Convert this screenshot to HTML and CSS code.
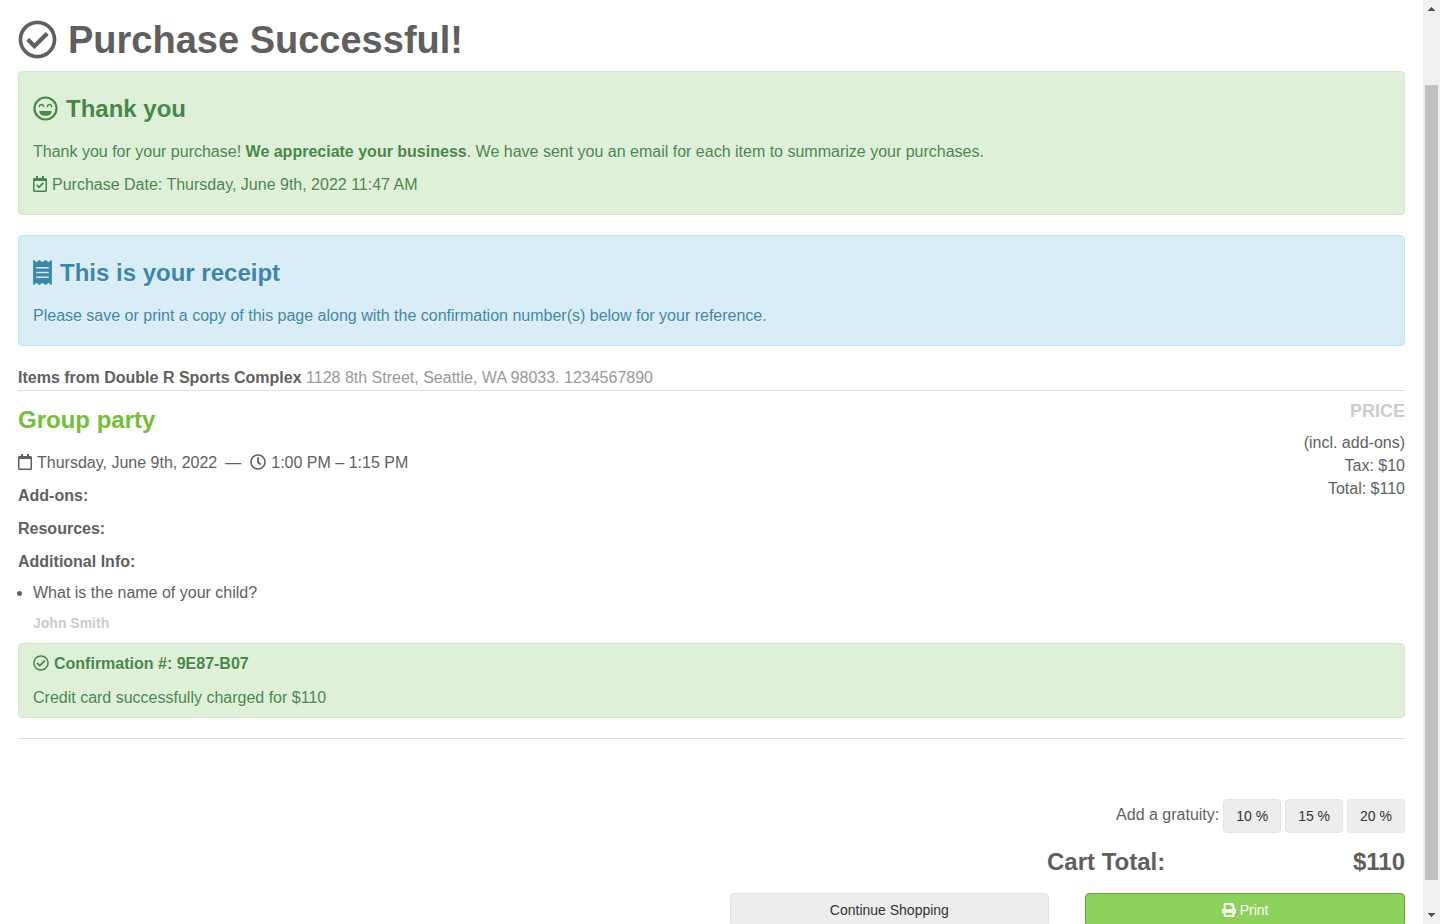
FILE: index.html
```html
<!DOCTYPE html>
<html lang="en">
<head>
<meta charset="utf-8">
<title>Purchase Successful</title>
<link rel="stylesheet" href="styles.css">
</head>
<body>
<svg class="defs" aria-hidden="true">
  <symbol id="circle-check" viewBox="0 0 512 512"><path d="M256 8C119.033 8 8 119.033 8 256s111.033 248 248 248 248-111.033 248-248S392.967 8 256 8zm0 48c110.532 0 200 89.451 200 200 0 110.532-89.451 200-200 200-110.532 0-200-89.451-200-200 0-110.532 89.451-200 200-200m140.204 130.267l-22.536-22.718c-4.667-4.705-12.265-4.736-16.970-.068L215.346 303.697l-59.792-60.277c-4.667-4.705-12.265-4.736-16.970-.069l-22.719 22.536c-4.705 4.667-4.736 12.265-.068 16.971l90.781 91.516c4.667 4.705 12.265 4.736 16.970.068l172.589-171.204c4.704-4.668 4.734-12.266.067-16.971z"/></symbol>
</svg>
<div class="window">
  <main class="page">
    <h1 class="title"><svg class="icon icon-xl" aria-hidden="true"><use href="#circle-check"/></svg>Purchase Successful!</h1>

    <section class="alert success">
      <h3 class="heading"><svg class="icon icon-lg" viewBox="0 0 496 512" aria-hidden="true"><path fill-rule="evenodd" d="M248 8a248 248 0 1 0 0 496a248 248 0 1 0 0-496zm0 44a204 204 0 1 1 0 408a204 204 0 1 1 0-408z"/><path d="M132 306H364C372 306 378 312 376 320C366 372 318 402 272 402H224C178 402 130 372 120 320C118 312 124 306 132 306z"/><path class="line" d="M123 218C130 160 202 160 209 218M287 218C294 160 366 160 373 218"/></svg>Thank you</h3>
      <p>Thank you for your purchase! <strong>We appreciate your business</strong>. We have sent you an email for each item to summarize your purchases.</p>
      <p class="icon-text"><svg class="icon icon-cal" viewBox="0 0 448 512" aria-hidden="true"><path fill-rule="evenodd" d="M400 64h-48V12c0-6.627-5.373-12-12-12h-40c-6.627 0-12 5.373-12 12v52H160V12c0-6.627-5.373-12-12-12h-40c-6.627 0-12 5.373-12 12v52H48C21.490 64 0 85.490 0 112v352c0 26.510 21.490 48 48 48h352c26.510 0 48-21.490 48-48V112c0-26.510-21.490-48-48-48zm-6 400H54a6 6 0 0 1-6-6V160h352v298a6 6 0 0 1-6 6z"/><path d="M341.151 250.236L200.842 389.421c-4.705 4.667-12.303 4.637-16.971-.068l-75.091-75.699c-4.667-4.705-4.637-12.303.068-16.971l22.719-22.536c4.705-4.667 12.303-4.637 16.970.069l44.104 44.461 111.072-110.181c4.705-4.667 12.303-4.637 16.971.068l22.536 22.718c4.667 4.705 4.636 12.303-.069 16.970z"/></svg>Purchase Date: Thursday, June 9th, 2022 11:47 AM</p>
    </section>

    <section class="alert info">
      <h3 class="heading"><svg class="icon icon-receipt" viewBox="0 0 384 512" aria-hidden="true"><path fill-rule="evenodd" d="M358.400 3.200L320 48 265.600 3.200a15.900 15.900 0 0 0-19.200 0L192 48 137.600 3.200a15.900 15.900 0 0 0-19.200 0L64 48 25.600 3.200C15-4.700 0 2.800 0 16v480c0 13.200 15 20.700 25.600 12.800L64 464l54.400 44.800a15.900 15.900 0 0 0 19.200 0L192 464l54.400 44.800a15.900 15.900 0 0 0 19.200 0L320 464l38.400 44.800c10.500 7.900 25.600.4 25.600-12.800V16c0-13.200-15-20.700-25.600-12.800zM320 360c0 4.400-3.600 8-8 8H72c-4.400 0-8-3.600-8-8v-16c0-4.400 3.600-8 8-8h240c4.400 0 8 3.600 8 8v16zm0-96c0 4.400-3.600 8-8 8H72c-4.400 0-8-3.600-8-8v-16c0-4.400 3.600-8 8-8h240c4.400 0 8 3.600 8 8v16zm0-96c0 4.400-3.600 8-8 8H72c-4.400 0-8-3.600-8-8v-16c0-4.400 3.600-8 8-8h240c4.400 0 8 3.600 8 8v16z"/></svg>This is your receipt</h3>
      <p>Please save or print a copy of this page along with the confirmation number(s) below for your reference.</p>
    </section>

    <p class="vendor"><strong>Items from Double R Sports Complex</strong> <span class="muted">1128 8th Street, Seattle, WA 98033. 1234567890</span></p>

    <section class="item">
      <div class="details">
        <h3 class="heading item-name">Group party</h3>
        <p class="icon-text"><svg class="icon icon-cal" viewBox="0 0 448 512" aria-hidden="true"><path fill-rule="evenodd" d="M400 64h-48V12c0-6.600-5.400-12-12-12h-40c-6.600 0-12 5.400-12 12v52H160V12c0-6.600-5.400-12-12-12h-40c-6.600 0-12 5.400-12 12v52H48C21.500 64 0 85.500 0 112v352c0 26.500 21.500 48 48 48h352c26.500 0 48-21.500 48-48V112c0-26.500-21.500-48-48-48zm-6 400H54a6 6 0 0 1-6-6V160h352v298a6 6 0 0 1-6 6z"/></svg>Thursday, June 9th, 2022 <span class="dash">—</span> <svg class="icon icon-sm" viewBox="0 0 512 512" aria-hidden="true"><path d="M256 8C119 8 8 119 8 256s111 248 248 248 248-111 248-248S393 8 256 8zm0 448c-110.500 0-200-89.500-200-200S145.500 56 256 56s200 89.500 200 200-89.500 200-200 200zm61.800-104.400l-84.900-61.700c-3.100-2.300-4.900-5.900-4.900-9.700V116c0-6.600 5.400-12 12-12h32c6.600 0 12 5.400 12 12v141.700l66.800 48.600c5.400 3.900 6.500 11.400 2.600 16.800L334.600 349c-3.900 5.300-11.400 6.500-16.800 2.600z"/></svg>1:00 PM – 1:15 PM</p>
        <p><strong>Add-ons:</strong></p>
        <p><strong>Resources:</strong></p>
        <p><strong>Additional Info:</strong></p>
        <ul class="answers">
          <li>What is the name of your child?<h5 class="answer">John Smith</h5></li>
        </ul>
      </div>
      <div class="price">
        <h4 class="price-label">PRICE</h4>
        <div>(incl. add-ons)</div>
        <div>Tax: $10</div>
        <div>Total: $110</div>
      </div>
    </section>

    <section class="alert success confirmation">
      <strong class="icon-text"><svg class="icon icon-sm" aria-hidden="true"><use href="#circle-check"/></svg>Confirmation #: 9E87-B07</strong>
      <span>Credit card successfully charged for $110</span>
    </section>

    <hr class="rule">

    <div class="gratuity">
      <span class="gratuity-label">Add a gratuity:</span>
      <button class="btn" type="button">10 %</button>
      <button class="btn" type="button">15 %</button>
      <button class="btn" type="button">20 %</button>
    </div>
    <div class="total"><span>Cart Total:</span><span>$110</span></div>
    <div class="actions">
      <button class="btn continue" type="button">Continue Shopping</button>
      <button class="btn print" type="button"><svg class="icon icon-print" viewBox="0 0 512 512" aria-hidden="true"><path fill-rule="evenodd" d="M448 192V77.250c0-8.490-3.370-16.620-9.370-22.630L393.370 9.370c-6-6-14.140-9.370-22.630-9.370H96C78.330 0 64 14.330 64 32v160c-35.350 0-64 28.650-64 64v112c0 8.840 7.160 16 16 16h48v96c0 17.670 14.330 32 32 32h320c17.670 0 32-14.330 32-32v-96h48c8.840 0 16-7.160 16-16V256c0-35.350-28.650-64-64-64zm-64 256H128v-96h256v96zm0-224H128V64h192v48c0 8.840 7.160 16 16 16h48v96zm48 72c-13.250 0-24-10.750-24-24 0-13.260 10.750-24 24-24s24 10.740 24 24c0 13.250-10.750 24-24 24z"/></svg>Print</button>
    </div>
  </main>
  <div class="scrollbar" aria-hidden="true">
    <svg class="arrow" viewBox="0 0 17 17"><path d="M5 11h7v-1h-1v-1h-1v-1h-1v-1h-1v1h-1v1h-1v1h-1z"/></svg>
    <div class="track"><div class="thumb"></div></div>
    <svg class="arrow" viewBox="0 0 17 17"><path d="M5 6h7v1h-1v1h-1v1h-1v1h-1v-1h-1v-1h-1v-1h-1z"/></svg>
  </div>
</div>
</body>
</html>
```
FILE: styles.css
```css
* { box-sizing: border-box; }

body {
  margin: 0;
  background: #fff;
  color: #5f5f5f;
  font: 16px/23px "Liberation Sans", Arial, sans-serif;
}

h1, h3, h4, h5, p, ul { margin: 0; }

.defs { display: none; }

.window {
  display: flex;
  height: 100vh;
  overflow: hidden;
}

.page {
  flex: 1;
  min-width: 0;
  padding: 20px 18px;
}

.icon {
  flex: none;
  margin-bottom: 2px;
  fill: currentColor;
}
.icon-xl {
  width: 39px;
  height: 39px;
  margin-bottom: 1px;
}
.icon-lg { width: 25px; height: 25px; }
.icon-receipt { width: 19px; height: 25px; }
.icon-sm { width: 16px; height: 16px; }
.icon-cal { width: 14px; height: 16px; }
.icon-print {
  width: 14px;
  height: 14px;
  margin-bottom: 0;
}
.line {
  fill: none;
  stroke: currentColor;
  stroke-width: 30;
  stroke-linecap: round;
}

.title {
  display: flex;
  align-items: center;
  gap: 11px;
  margin-bottom: 11px;
  font-size: 38px;
  line-height: 40px;
}

.heading {
  display: flex;
  align-items: center;
  gap: 8px;
  margin: 9px 0 11px;
  font-size: 24px;
  line-height: 40px;
}

.icon-text {
  display: flex;
  align-items: center;
  gap: 5px;
}

.alert {
  display: flow-root;
  margin-bottom: 20px;
  padding: 8px 14px;
  border: 1px solid;
  border-radius: 4px;
  text-shadow: 0 1px 0 rgba(255, 255, 255, 0.5);
}
.alert p { margin-bottom: 10px; }
.success { background: #dff0d8; border-color: #d0e9c0; color: #468847; }
.info { background: #d9edf7; border-color: #bce8f1; color: #3a87ad; }

.vendor {
  padding-bottom: 1px;
  border-bottom: 1px solid #ddd;
}
.muted { color: #999; }

.item {
  display: flex;
  justify-content: space-between;
}
.details p { margin-bottom: 10px; }
.item-name { color: #72bf37; }
.dash { margin: 0 4px 0 3px; }
.answers {
  padding-left: 15px;
  line-height: 20px;
}
.answer {
  margin: 10px 0;
  color: #ccc;
  font-size: 14px;
}

.price {
  padding-top: 10px;
  text-align: right;
}
.price-label {
  margin-bottom: 10px;
  color: #ccc;
  font-size: 18px;
  line-height: 20px;
}

.confirmation {
  display: flex;
  flex-direction: column;
  gap: 11px;
}

.rule {
  margin: 0 0 60px;
  border: 0;
  border-top: 1px solid #ddd;
}

.btn {
  padding: 6px 12px;
  border: 1px solid #e3e3e3;
  border-radius: 4px;
  background: #ededed;
  color: #333;
  font: 14px/20px "Liberation Sans", Arial, sans-serif;
}

.gratuity {
  display: flex;
  justify-content: flex-end;
  gap: 4px;
  margin-bottom: 9px;
}
.gratuity-label { padding-top: 4px; }

.total {
  display: flex;
  justify-content: space-between;
  width: 358px;
  margin: 0 0 11px auto;
  font-size: 24px;
  font-weight: bold;
  line-height: 40px;
}

.actions {
  display: grid;
  grid-template-columns: repeat(4, 1fr);
  gap: 36px;
}
.continue { grid-column: 3; }
.print {
  display: flex;
  align-items: center;
  justify-content: center;
  gap: 4px;
  background: #8bd15a;
  border-color: #62a835;
  color: #fff;
}

.scrollbar {
  display: flex;
  flex-direction: column;
  width: 17px;
  background: #f0f0f0;
}
.arrow {
  width: 17px;
  height: 17px;
  fill: #505050;
}
.track {
  display: grid;
  grid-template-rows: 68fr 795fr 27fr;
  flex: 1;
  padding: 0 2px;
}
.thumb {
  grid-row: 2;
  background: #c1c1c1;
}
```
